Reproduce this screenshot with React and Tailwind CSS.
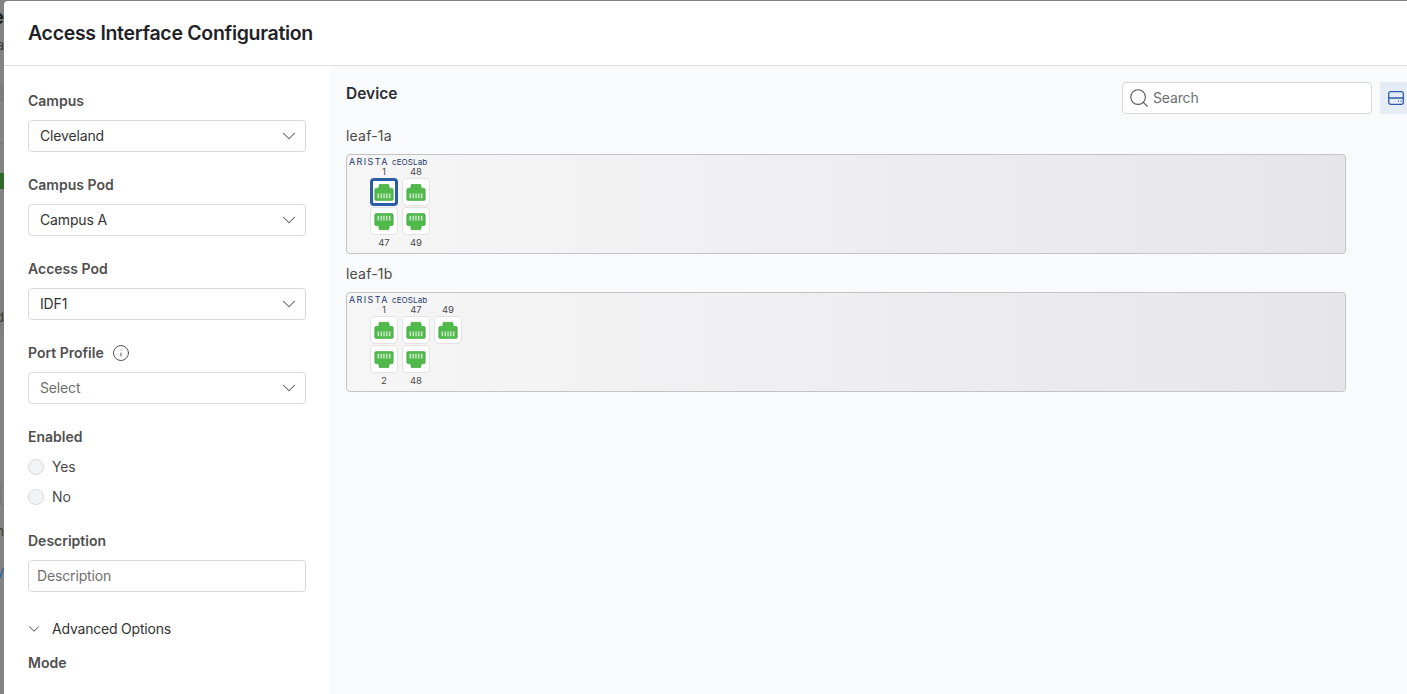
import React from "react";
import { ChevronDown, Info, Search } from "lucide-react";

const font = { fontFamily: "Inter, sans-serif" };

// RJ45 port glyph, flipped for the bottom row
const PortIcon = ({ flip }) => (
  <svg width="20" height="17" viewBox="0 0 20 17" className={flip ? "rotate-180" : ""}>
    <path
      d="M5 1.5 a1.2 1.2 0 0 1 1.2-1.2 h7.6 a1.2 1.2 0 0 1 1.2 1.2 V4.2 h2.6 a1.6 1.6 0 0 1 1.6 1.6 V15 a1.6 1.6 0 0 1-1.6 1.6 H2.4 A1.6 1.6 0 0 1 .8 15 V5.8 A1.6 1.6 0 0 1 2.4 4.2 H5 Z"
      fill="#4fba4a"
      stroke="#3f9f3b"
      strokeWidth="0.6"
    />
    <path d="M3.6 9.6h1.3v4.6H3.6zM6.6 9.6h1.3v4.6H6.6zM9.4 9.6h1.3v4.6H9.4zM12.2 9.6h1.3v4.6h-1.3zM15.1 9.6h1.3v4.6h-1.3z" fill="#dff2dc" />
  </svg>
);

const Port = ({ flip, selected }) => (
  <div
    className={
      "flex h-7 w-7 items-center justify-center rounded-[4px] bg-white " +
      (selected ? "border-[3px] border-[#2b5ca8]" : "border border-[#e2e2e2]")
    }
  >
    <PortIcon flip={flip} />
  </div>
);

const Label = ({ children }) => <div className="text-[14px] leading-5 font-semibold text-[#4f4f4f]">{children}</div>;

const SelectBox = ({ value, muted }) => (
  <div className="mt-[9px] flex h-8 items-center justify-between rounded-[4px] border border-[#d9d9d9] bg-white pr-[5px] pl-[11px]">
    <span className={"pb-[1px] text-[14px] tracking-[-0.15px] " + (muted ? "text-[#6f6f6f]" : "text-[#333]")}>{value}</span>
    <ChevronDown size={22} strokeWidth={1.1} className="text-[#555]" />
  </div>
);

const Radio = ({ label }) => (
  <div className="flex h-[30px] items-center gap-2">
    <span className="h-4 w-4 rounded-full border border-[#d9d9d9] bg-[#f2f3f5]" />
    <span className="pb-[1px] text-[14px] tracking-[-0.15px] text-[#4a4a4a]">{label}</span>
  </div>
);

const AristaMark = () => (
  <div className="flex h-[11px] items-center gap-[3px] pl-[2px]">
    <span className="w-[40px] text-[9px] leading-none font-normal tracking-[1.4px] whitespace-nowrap text-[#1d3a6e]">ARISTA</span>
    <span className="text-[8px] leading-none tracking-[0.1px] text-[#1d3a6e]">cEOSLab</span>
  </div>
);

const Device = ({ name, top, bottom }) => (
  <div>
    <div className="text-[14px] leading-5 tracking-[0.2px] text-[#4a4a4a]">{name}</div>
    <div className="mt-2 h-[100px] w-[1000px] rounded-[4px] border border-[#c4c4c4] bg-gradient-to-r from-[#f6f6f7] to-[#e6e6e8] pt-[1px]">
      <AristaMark />
      <div className="ml-[23px] flex gap-1">
        {top.map((p, i) => (
          <div key={p} className="w-7">
            <div className="mb-[1px] text-center text-[9.5px] leading-[10px] text-[#4a4a4a]">{p}</div>
            <Port selected={name === "leaf-1a" && i === 0} />
          </div>
        ))}
      </div>
      <div className="mt-[1px] ml-[23px] flex gap-1">
        {bottom.map((p) => (
          <div key={p} className="w-7">
            <Port flip />
            <div className="mt-[2px] text-center text-[9.5px] leading-[11px] text-[#4a4a4a]">{p}</div>
          </div>
        ))}
      </div>
    </div>
  </div>
);

// sliver of the page behind the dialog, only its last pixels show
const Backdrop = () => (
  <div className="flex h-full w-[4px] shrink-0 flex-col items-end overflow-hidden">
    <div className="mt-[7px] flex h-5 items-center justify-end text-[20px] font-semibold text-[#1f1f1f]">e</div>
    <div className="mt-[11px] flex h-4 items-center justify-end text-[13px] text-[#3a3a3a]">a</div>
    <div className="mt-[31px] h-[16px] w-full shrink-0 border-y border-[#777] bg-[#7d7d7d]" />
    <div className="mt-[42px] h-[1px] w-full shrink-0 bg-[#777]" />
    <div className="mt-[29px] h-[16px] w-full shrink-0 bg-[#2f6a2c]" />
    <div className="mt-[93px] h-[55px] w-full shrink-0 border-y border-[#7a7a7a] bg-[#7f7f7f]" />
    <div className="mt-[-27px] flex h-4 items-center justify-end text-[13px] text-[#3a3a3a]">d</div>
    <div className="mt-[157px] h-[22px] w-full shrink-0 rounded-l border-y border-l border-[#777]" />
    <div className="mt-[19px] flex h-4 items-center justify-end text-[13px] text-[#3a3a3a]">n</div>
    <div className="mt-[24px] flex h-4 items-center justify-end text-[13px] text-[#2b5ca8]">y</div>
  </div>
);

export default function App() {
  return (
    <div style={font} className="flex h-[694px] w-[1407px] overflow-hidden bg-[#838383]">
      <Backdrop />
      <div className="mt-[1px] flex min-w-0 flex-1 flex-col rounded-tl-[4px] bg-white">
        <div className="flex h-[65px] shrink-0 items-center border-b border-[#dedede] pt-[1px] pl-6 text-[19.5px] font-semibold tracking-[-0.3px] text-[#1f2328]">
          Access Interface Configuration
        </div>
        <div className="flex min-h-0 flex-1">
          <div className="w-[326px] shrink-0 overflow-hidden pt-[25px] pr-6 pl-6">
            <Label>Campus</Label>
            <SelectBox value="Cleveland" />
            <div className="mt-[23px]">
              <Label>Campus Pod</Label>
              <SelectBox value="Campus A" />
            </div>
            <div className="mt-[23px]">
              <Label>Access Pod</Label>
              <SelectBox value="IDF1" />
            </div>
            <div className="mt-[23px]">
              <div className="flex items-center gap-2">
                <Label>Port Profile</Label>
                <Info size={18} strokeWidth={1.2} className="text-[#444]" />
              </div>
              <SelectBox value="Select" muted />
            </div>
            <div className="mt-[23px]">
              <Label>Enabled</Label>
              <div className="mt-[5px]">
                <Radio label="Yes" />
                <Radio label="No" />
              </div>
            </div>
            <div className="mt-[19px]">
              <Label>Description</Label>
              <div className="mt-[9px] flex h-8 items-center rounded-[4px] border border-[#d9d9d9] bg-white pb-[1px] pl-2 text-[14px] tracking-[-0.15px] text-[#6f6f6f]">
                Description
              </div>
            </div>
            <div className="mt-[27px] flex h-5 items-center gap-[9px] text-[14px] tracking-[-0.2px] text-[#333]">
              <ChevronDown size={18} strokeWidth={1.2} className="-ml-[3px] shrink-0" />
              <span className="pb-[1px]">Advanced Options</span>
            </div>
            <div className="mt-[14px]">
              <Label>Mode</Label>
            </div>
          </div>
          <div className="flex-1 overflow-hidden bg-[#f9fafc] pt-4 pl-4">
            <div className="flex h-8 items-start justify-between">
              <div className="pt-[2px] text-[15.5px] leading-5 font-semibold text-[#2a2d31]">Device</div>
              <div className="flex">
                <div className="flex h-8 w-[250px] items-center gap-[3px] rounded-[4px] border border-[#d9d9d9] bg-white pb-[1px] pl-[5px] text-[14px] tracking-[-0.15px] text-[#6f6f6f]">
                  <Search size={22} strokeWidth={1.2} className="text-[#555]" />
                  Search
                </div>
                <div className="ml-2 flex h-8 w-[27px] items-center bg-[#e6ecf6] pl-2">
                  <svg width="16" height="14" viewBox="0 0 16 14" fill="none" stroke="#2b5ca8" strokeWidth="1.3" className="shrink-0">
                    <rect x="0.7" y="0.7" width="14.6" height="12.6" rx="2" />
                    <path d="M0.7 7h14.6M10 10.2h1M12.5 10.2h1" />
                  </svg>
                </div>
              </div>
            </div>
            <div className="mt-3 flex flex-col gap-[10px]">
              <Device name="leaf-1a" top={["1", "48"]} bottom={["47", "49"]} />
              <Device name="leaf-1b" top={["1", "47", "49"]} bottom={["2", "48"]} />
            </div>
          </div>
        </div>
      </div>
    </div>
  );
}
